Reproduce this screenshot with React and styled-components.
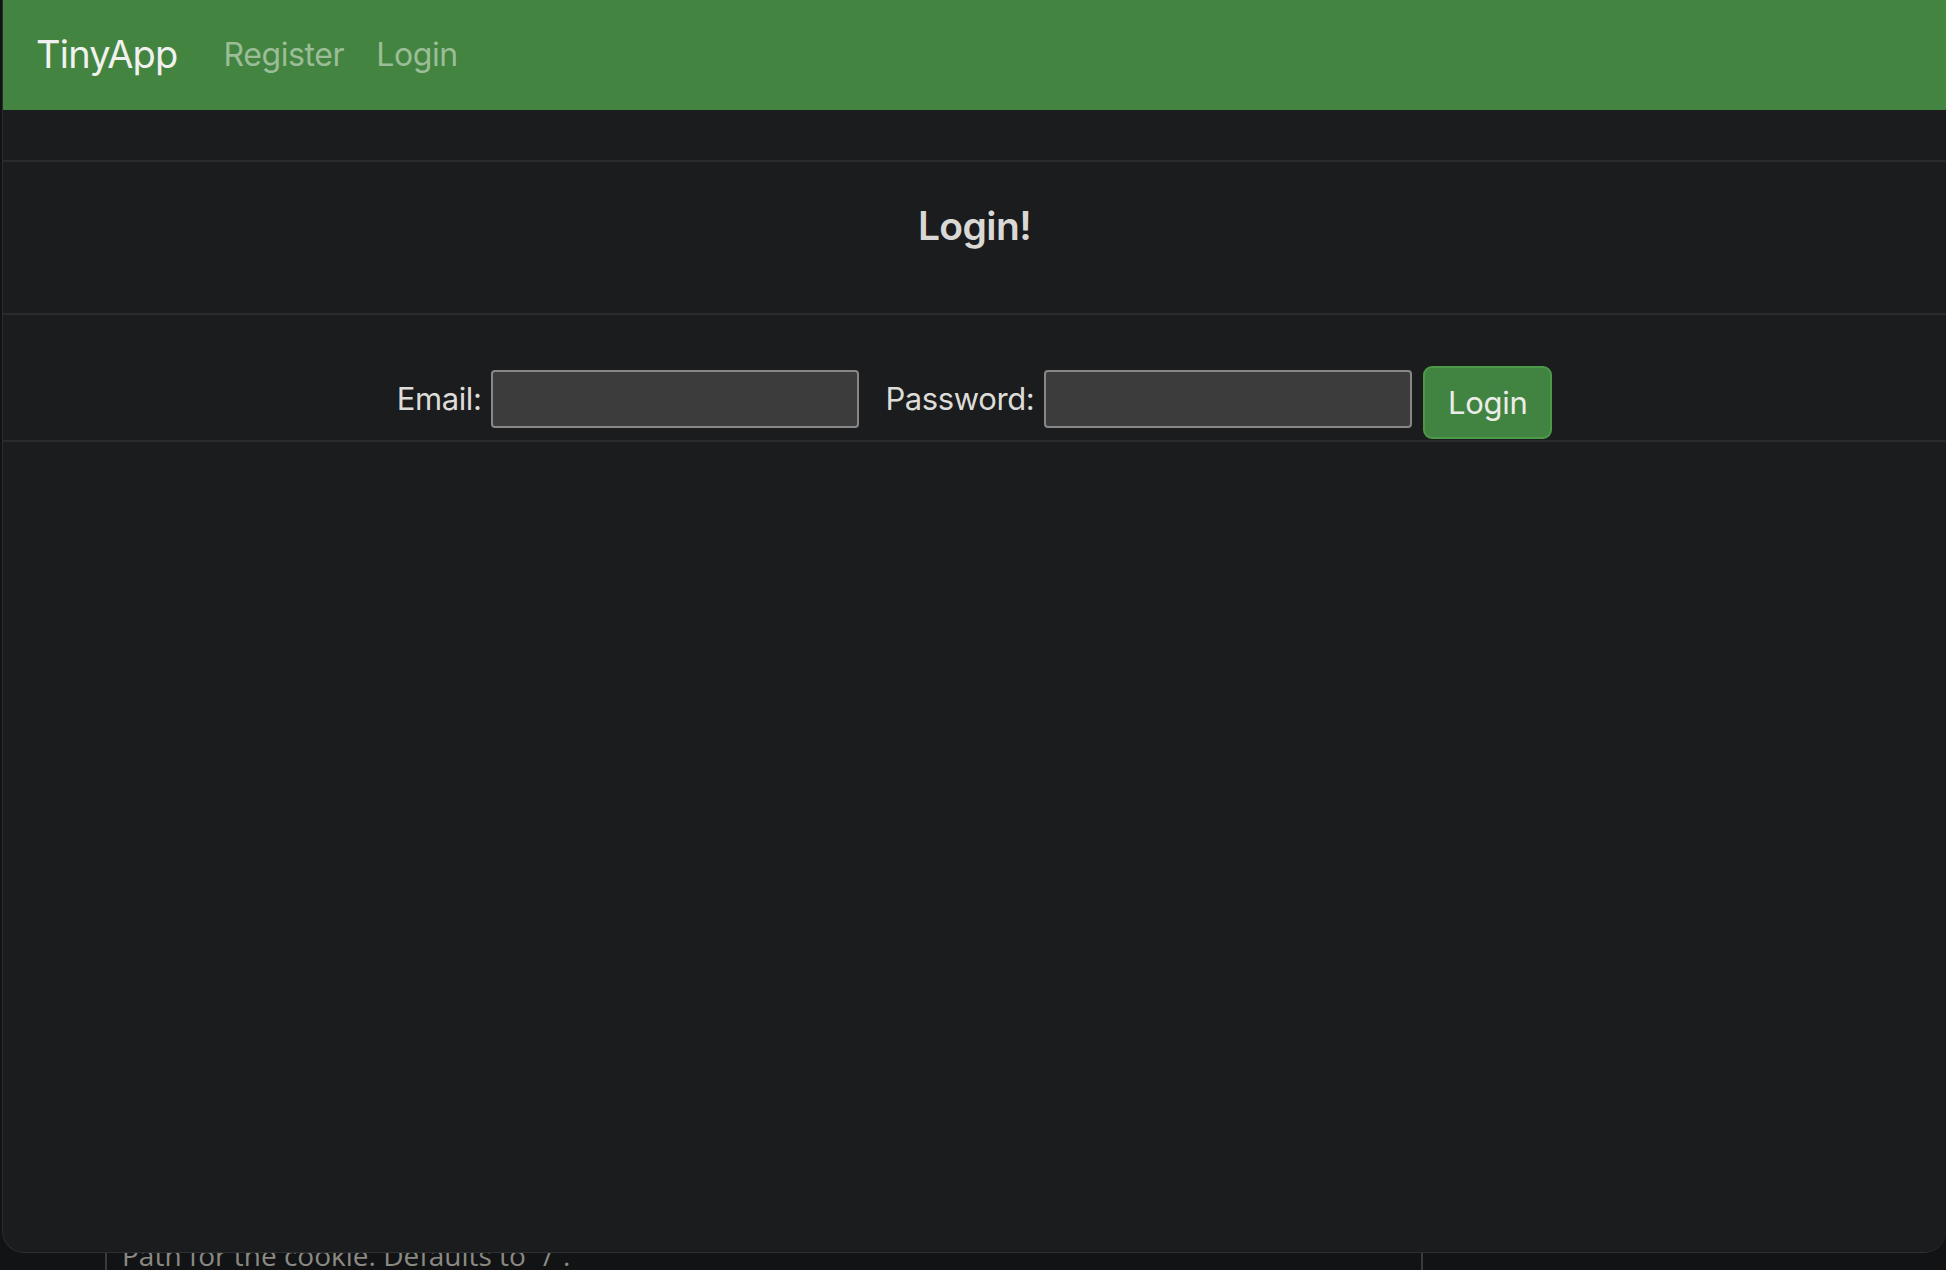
import React from "react";
import styled, { createGlobalStyle } from "styled-components";

const GlobalStyle = createGlobalStyle`
  html, body {
    margin: 0;
    padding: 0;
    background: #121315;
  }
  body {
    font-family: Inter, "Liberation Sans", sans-serif;
    overflow: hidden;
  }
`;

function App() {
  return (
    <>
      <GlobalStyle />
      <Desktop>
        <Window>
          <Navbar>
            <Brand>TinyApp</Brand>
            <NavLink>Register</NavLink>
            <NavLink>Login</NavLink>
          </Navbar>
          <Spacer />
          <HeadingSection>
            <Title>Login!</Title>
          </HeadingSection>
          <FormRow>
            <Label>Email:</Label>
            <Input type="text" />
            <Label $gap>Password:</Label>
            <Input type="password" />
            <SubmitButton>Login</SubmitButton>
          </FormRow>
        </Window>
        <BehindPage>
          <DocColumn>
            <DocText>Path for the cookie. Defaults to “/”.</DocText>
          </DocColumn>
        </BehindPage>
      </Desktop>
    </>
  );
}

const Desktop = styled.div`
  width: 1946px;
  height: 1270px;
  display: flex;
  flex-direction: column;
  background: #121315;
`;

const Window = styled.div`
  height: 1253px;
  margin-left: 2px;
  background: #1b1c1e;
  border-left: 1px solid #2b2c2f;
  border-bottom: 1px solid #2e2f32;
  border-radius: 0 0 22px 22px;
  overflow: hidden;
  box-sizing: border-box;
  display: flex;
  flex-direction: column;
`;

const Navbar = styled.nav`
  height: 110px;
  flex-shrink: 0;
  background: #428440;
  display: flex;
  align-items: center;
  padding-left: 33px;
  padding-bottom: 2px;
  box-sizing: border-box;
`;

const Brand = styled.a`
  font-size: 38px;
  color: #f1f1ef;
  margin-right: 30px;
  letter-spacing: -0.8px;
`;

const NavLink = styled.a`
  font-size: 32px;
  color: #9bbd97;
  padding: 0 16px;
  letter-spacing: -0.4px;
`;

const Spacer = styled.div`
  height: 50px;
  flex-shrink: 0;
  border-bottom: 2px solid #2a2b2e;
`;

const HeadingSection = styled.div`
  height: 153px;
  flex-shrink: 0;
  border-bottom: 2px solid #2a2b2e;
  display: flex;
  justify-content: center;
  padding-top: 40px;
  box-sizing: border-box;
`;

const Title = styled.h1`
  margin: 0;
  font-size: 39px;
  font-weight: 600;
  color: #d9d8d5;
  letter-spacing: -0.6px;
`;

const FormRow = styled.form`
  flex-shrink: 0;
  height: 127px;
  border-bottom: 2px solid #2a2b2e;
  display: flex;
  justify-content: center;
  align-items: center;
  padding-top: 42px;
  box-sizing: border-box;
  margin: 0;
`;

const Label = styled.label`
  font-size: 31px;
  color: #dddcd8;
  margin-left: ${(p) => (p.$gap ? "26px" : "0")};
  margin-right: 10px;
  letter-spacing: -0.4px;
`;

const Input = styled.input`
  width: 368px;
  height: 58px;
  box-sizing: border-box;
  background: #3c3c3c;
  border: 2px solid #878787;
  border-radius: 4px;
  outline: none;
`;

const SubmitButton = styled.button`
  margin-left: 11px;
  width: 129px;
  height: 73px;
  box-sizing: border-box;
  background: #418340;
  border: 2px solid #4c9a48;
  border-radius: 9px;
  color: #ecece9;
  font-family: Inter, "Liberation Sans", sans-serif;
  font-size: 31px;
  letter-spacing: -0.3px;
  padding: 0;
  position: relative;
  top: 4px;
`;

const BehindPage = styled.div`
  flex: 1;
  overflow: hidden;
  display: flex;
  padding-left: 105px;
  background: #121315;
`;

const DocColumn = styled.div`
  width: 1314px;
  border-left: 2px solid #3a3b3d;
  border-right: 2px solid #3a3b3d;
  overflow: hidden;
`;

const DocText = styled.p`
  margin: -15px 0 0 15px;
  font-family: "Open Sans", sans-serif;
  font-size: 28px;
  line-height: 34px;
  color: #8a8983;
  white-space: nowrap;
`;

export default App;
